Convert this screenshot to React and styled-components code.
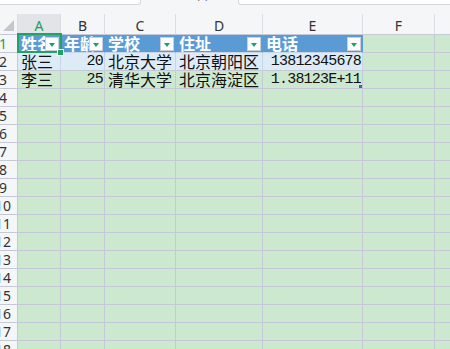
import React from "react";
import styled, { createGlobalStyle } from "styled-components";

const GlobalStyle = createGlobalStyle`
  html, body { margin: 0; padding: 0; overflow: hidden; background: #cce8cf; }
  #root { width: 450px; height: 349px; overflow: hidden; }
`;

const GREEN = "#cce8cf";
const LINE = "#c5c9d7";
const HEAD_BG = "#f5f6f8";
const SEL = "#21a366";

const COLS = [
  { k: "A", w: 43 },
  { k: "B", w: 44 },
  { k: "C", w: 71 },
  { k: "D", w: 87 },
  { k: "E", w: 100 },
  { k: "F", w: 72 },
  { k: "G", w: 80 },
];

const TABLE_HEAD = ["姓名", "年龄", "学校", "住址", "电话"];
const TABLE_ROWS = [
  [
    { t: "张三" },
    { t: "20", num: true },
    { t: "北京大学" },
    { t: "北京朝阳区" },
    { t: "13812345678", num: true },
  ],
  [
    { t: "李三" },
    { t: "25", num: true },
    { t: "清华大学" },
    { t: "北京海淀区" },
    { t: "1.38123E+11", num: true, handle: true },
  ],
];

const Page = styled.div`
  width: 450px;
  height: 349px;
  overflow: hidden;
  display: flex;
  flex-direction: column;
  background: ${GREEN};
`;

const TopBar = styled.div`
  height: 14px;
  flex: none;
  display: flex;
  background: ${HEAD_BG};
`;

const NameBox = styled.div`
  width: 140px;
  height: 4px;
  background: #fff;
  border-right: 1px solid #d6d8dd;
  border-bottom: 1px solid #d6d8dd;
  border-bottom-right-radius: 3px;
`;

const FxArea = styled.div`
  flex: 1;
  display: flex;
  justify-content: center;
  overflow: hidden;
  padding-left: 30px;
`;

const FxGlyph = styled.span`
  font-family: "DejaVu Sans", sans-serif;
  font-size: 12px;
  line-height: 12px;
  margin-top: -10px;
  color: #6b7080;
  letter-spacing: 4px;
`;

const FormulaBox = styled.div`
  width: 211px;
  height: 4px;
  background: #fff;
  border-left: 1px solid #d6d8dd;
  border-bottom: 1px solid #d6d8dd;
  border-bottom-left-radius: 3px;
`;

const Row = styled.div`
  display: flex;
  flex: none;
  height: ${(p) => p.$h}px;
`;

const Corner = styled.div`
  width: 18px;
  flex: none;
  box-sizing: border-box;
  background: ${HEAD_BG};
  border-right: 1px solid #dcdee3;
  border-bottom: 1px solid ${LINE};
  display: flex;
  align-items: flex-end;
  justify-content: flex-end;
  padding: 0 3px 3px 0;
`;

const CornerTri = styled.div`
  width: 0;
  height: 0;
  border-left: 11px solid transparent;
  border-bottom: 11px solid #c5c7cc;
`;

const ColHead = styled.div`
  width: ${(p) => p.$w}px;
  flex: none;
  box-sizing: border-box;
  background: ${(p) => (p.$active ? "#e2e4e8" : HEAD_BG)};
  border-right: 1px solid #dcdee3;
  border-bottom: 1px solid ${LINE};
  display: flex;
  align-items: center;
  justify-content: center;
  padding-top: 2px;
  font-family: "Noto Sans", "DejaVu Sans", sans-serif;
  font-size: 14px;
  color: ${(p) => (p.$active ? "#1e9e5a" : "#333")};
`;

const RowHead = styled.div`
  width: 18px;
  flex: none;
  box-sizing: border-box;
  background: ${HEAD_BG};
  border-right: 1px solid ${LINE};
  border-bottom: 1px solid ${LINE};
  overflow: hidden;
  display: flex;
  align-items: center;
`;

const RowNum = styled.span`
  width: 6px;
  flex: none;
  display: flex;
  justify-content: center;
  white-space: nowrap;
  font-family: "Noto Sans", "DejaVu Sans", sans-serif;
  font-size: 14px;
  line-height: 17px;
  color: ${(p) => (p.$active ? "#1e9e5a" : "#333")};
`;

const Cell = styled.div`
  position: relative;
  width: ${(p) => p.$w}px;
  flex: none;
  box-sizing: border-box;
  background: ${(p) => p.$bg || GREEN};
  border-right: 1px solid ${(p) => p.$vline || LINE};
  border-bottom: 1px solid ${(p) => p.$hline || LINE};
  display: flex;
  align-items: center;
  justify-content: ${(p) => (p.$num ? "flex-end" : "flex-start")};
  padding: ${(p) => (p.$num ? "0 1px 0 0" : "0 0 0 3px")};
  overflow: ${(p) => (p.$selected ? "visible" : "hidden")};
  white-space: nowrap;
  font-family: ${(p) =>
    p.$num
      ? `"Liberation Mono", "DejaVu Sans Mono", monospace`
      : `"Noto Sans CJK SC", "Noto Sans", sans-serif`};
  font-size: ${(p) => (p.$num ? "15px" : "16px")};
  letter-spacing: ${(p) => (p.$num ? "-0.8px" : "0")};
  font-weight: ${(p) => (p.$bold ? 700 : 400)};
  line-height: 17px;
  color: ${(p) => (p.$bold ? "#fff" : "#111")};
`;

const CellText = styled.span`
  display: block;
  overflow: hidden;
`;

const FilterBtn = styled.div`
  position: absolute;
  right: 1px;
  top: 2px;
  width: 14px;
  height: 14px;
  box-sizing: border-box;
  background: #fff;
  border: 1px solid #c9cfd8;
  display: flex;
  align-items: center;
  justify-content: center;
  z-index: 1;
`;

const FilterTri = styled.div`
  width: 0;
  height: 0;
  border-left: 3.5px solid transparent;
  border-right: 3.5px solid transparent;
  border-top: 4px solid #1fa060;
  margin-top: 1px;
`;

const SelectBorder = styled.div`
  position: absolute;
  left: -1px;
  top: -2px;
  right: -2px;
  bottom: -1px;
  border: 2px solid ${SEL};
  pointer-events: none;
  z-index: 2;
`;

const FillHandle = styled.div`
  position: absolute;
  right: -4px;
  bottom: -4px;
  width: 5px;
  height: 5px;
  background: ${SEL};
  border: 1px solid #fff;
  z-index: 3;
`;

const ResizeHandle = styled.div`
  position: absolute;
  right: 0;
  bottom: 0;
  width: 3px;
  height: 3px;
  background: #3f63b8;
`;

const HEADER_BLUE = "#5b9bd5";
const BAND_BLUE = "#ddebf7";

export default function App() {
  const rows = [];
  for (let r = 1; r <= 18; r++) {
    const cells = COLS.map((c, ci) => {
      if (r === 1 && ci < 5) {
        return (
          <Cell
            key={c.k}
            $w={c.w}
            $bg={HEADER_BLUE}
            $vline={HEADER_BLUE}
            $hline="#c9d6ea"
            $bold
            $selected={ci === 0}
          >
            <CellText>{TABLE_HEAD[ci]}</CellText>
            <FilterBtn>
              <FilterTri />
            </FilterBtn>
            {ci === 0 && (
              <>
                <SelectBorder />
                <FillHandle />
              </>
            )}
          </Cell>
        );
      }
      if ((r === 2 || r === 3) && ci < 5) {
        const d = TABLE_ROWS[r - 2][ci];
        const banded = r === 2;
        return (
          <Cell
            key={c.k}
            $w={c.w}
            $bg={banded ? BAND_BLUE : GREEN}
            $vline={banded ? "#c9d4e6" : LINE}
            $num={d.num}
          >
            <CellText>{d.t}</CellText>
            {d.handle && <ResizeHandle />}
          </Cell>
        );
      }
      return <Cell key={c.k} $w={c.w} />;
    });
    rows.push(
      <Row key={r} $h={18}>
        <RowHead>
          <RowNum $active={r === 1}>{r}</RowNum>
        </RowHead>
        {cells}
      </Row>
    );
  }

  return (
    <>
      <GlobalStyle />
      <Page>
        <TopBar>
          <NameBox />
          <FxArea>
            <FxGlyph>()</FxGlyph>
          </FxArea>
          <FormulaBox />
        </TopBar>
        <Row $h={21}>
          <Corner>
            <CornerTri />
          </Corner>
          {COLS.map((c, i) => (
            <ColHead key={c.k} $w={c.w} $active={i === 0}>
              {c.k}
            </ColHead>
          ))}
        </Row>
        {rows}
      </Page>
    </>
  );
}
